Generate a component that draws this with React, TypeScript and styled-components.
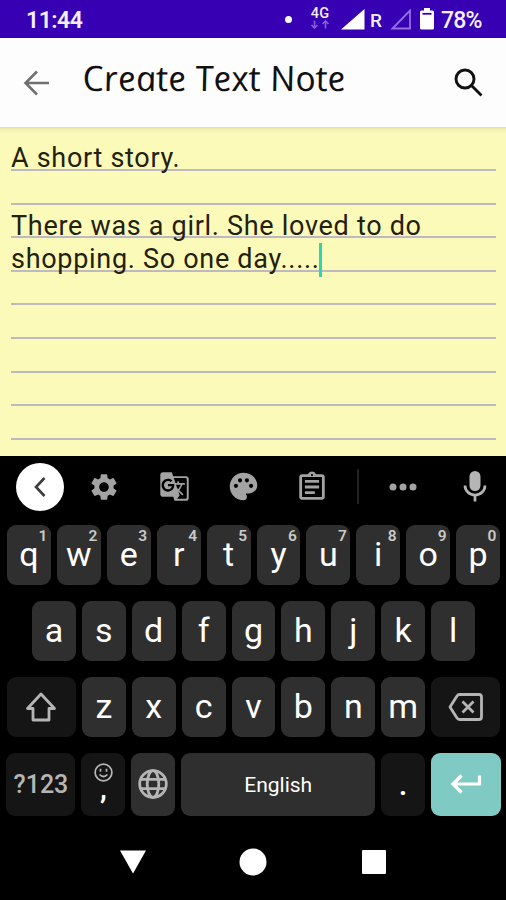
import React from "react";
import styled, { createGlobalStyle, css } from "styled-components";
import {
  MdSettings,
  MdGTranslate,
  MdPalette,
  MdOutlineAssignment,
} from "react-icons/md";

const GlobalStyle = createGlobalStyle`
  * { box-sizing: border-box; }
  body { margin: 0; background: #000; }
  svg { display: block; flex: none; }
`;

const Screen = styled.div`
  width: 506px;
  height: 900px;
  display: flex;
  flex-direction: column;
  overflow: hidden;
  background: #000;
  font-family: Roboto, "Liberation Sans", sans-serif;
`;

const StatusBar = styled.header`
  height: 38px;
  flex: none;
  display: flex;
  align-items: center;
  justify-content: space-between;
  padding: 2px 24px 0 26px;
  background: #3700b3;
  color: #f4f0ff;
  font-size: 23px;
  font-weight: 500;
`;

const Clock = styled.span`
  font-weight: 600;
  letter-spacing: -0.5px;
`;

const StatusIcons = styled.div`
  display: flex;
  align-items: center;
`;

const Dot = styled.i`
  width: 7px;
  height: 7px;
  margin: -2px 18px 0 0;
  border-radius: 50%;
  background: #fff;
`;

const Network = styled.div`
  display: flex;
  flex-direction: column;
  align-items: center;
  width: 20px;
  margin: -2px 11px 0 0;
  font-size: 14.5px;
  line-height: 12px;
  letter-spacing: 0.3px;
`;

const Roaming = styled.span`
  width: 12px;
  margin: 1px 8px 0 5px;
  font-size: 19px;
`;

const Battery = styled.svg`
  margin-left: 7px;
`;

const Percent = styled.span`
  width: 41px;
  margin-left: 6px;
  letter-spacing: -0.8px;
`;

const AppBar = styled.div`
  height: 89px;
  flex: none;
  display: flex;
  align-items: center;
  padding: 0 22px 0 22px;
  background: #fdfdfd;
`;

const Title = styled.h1`
  flex: 1;
  margin: -10px 0 0 34px;
  color: #111;
  font: italic 400 35px "Open Sans", "Noto Sans", sans-serif;
  white-space: nowrap;
  transform: skewX(11deg) scaleX(1.03);
  transform-origin: 0 75%;
`;

const Paper = styled.main`
  height: 329px;
  flex: none;
  padding: 10.4px 10px 0 11px;
  background: linear-gradient(#e2e0a4, #f5f3b2 3px, #fcfab8 7px);
`;

const NoteLine = styled.div`
  height: 33.6px;
  display: flex;
  padding-top: 5px;
  border-bottom: 2px solid #bcb9c2;
  color: #22210f;
  font-size: 27px;
  line-height: 33.6px;
  letter-spacing: 0.7px;
  white-space: pre;
`;

const Caret = styled.i`
  width: 3px;
  height: 34px;
  flex: none;
  margin-left: -1px;
  background: #2bd4b2;
`;

const Tools = styled.div`
  height: 61px;
  flex: none;
  display: grid;
  grid-template-columns: 58px 70px 70px 69px 68px 24px 66px 78px;
  place-items: center;
  padding-left: 11px;
  color: #a3a3a3;
`;

const Collapse = styled.button`
  width: 48px;
  height: 48px;
  display: grid;
  place-items: center;
  padding: 0;
  border: 0;
  border-radius: 50%;
  background: #fff;
`;

const Divider = styled.i`
  width: 1.5px;
  height: 35px;
  background: #222;
`;

const Keyboard = styled.div`
  display: flex;
  flex-direction: column;
  gap: 16px;
  padding: 8px 5.5px 0 6.5px;
`;

const KeyRow = styled.div<{ $h?: number }>`
  height: ${(p) => p.$h ?? 60}px;
  display: flex;
  justify-content: center;
  gap: 6px;
`;

const Key = styled.button<{ $w?: number; $tone?: "dark" | "accent" }>`
  position: relative;
  width: ${(p) => p.$w ?? 43.9}px;
  flex: none;
  display: flex;
  align-items: center;
  justify-content: center;
  padding: 0;
  border: 0;
  border-radius: 9px;
  background: #2f2f2f;
  color: #fff;
  font-family: inherit;
  font-size: 34px;
  line-height: 40px;
  ${(p) => p.$tone === "dark" && css`background: #151515; color: #b5b5b5;`}
  ${(p) => p.$tone === "accent" && css`background: #7fcbc3; color: #fff;`}
`;

const Letter = styled.span`
  margin-top: -3px;
`;

const Hint = styled.sup`
  position: absolute;
  top: 4px;
  right: 3.5px;
  color: #c9c9c9;
  font-size: 15.5px;
  font-weight: 600;
  line-height: 15px;
`;

const Label = styled.span<{ $size: number; $weight?: number }>`
  margin-top: 2px;
  font-size: ${(p) => p.$size}px;
  font-weight: ${(p) => p.$weight ?? 400};
`;

const EmojiComma = styled.div`
  height: 100%;
  display: flex;
  flex-direction: column;
  align-items: center;
  padding-top: 10px;
`;

const Comma = styled.span`
  margin-top: -4px;
  color: #fff;
  font-size: 29px;
  font-weight: 600;
  line-height: 20px;
`;

const Period = styled.span`
  margin-top: 2px;
  color: #fff;
  font-size: 31px;
  font-weight: 500;
`;

const NavBar = styled.nav`
  display: flex;
  align-items: center;
  justify-content: center;
  gap: 92.5px;
  padding-top: 32px;
`;

const lines = [
  "A short story.",
  "",
  "There was a girl. She loved to do",
  "shopping. So one day.....",
  "",
  "",
  "",
  "",
  "",
];

export default function App() {
  return (
    <>
      <GlobalStyle />
      <Screen>
        <StatusBar>
          <Clock>11:44</Clock>
          <StatusIcons>
            <Dot />
            <Network>
              4G
              <svg width="20" height="10" viewBox="0 0 20 10" fill="none" stroke="#8260d5" strokeWidth="1.6">
                <path d="M4.500 0.500v7M1.500 5l3 3 3-3M15.500 8.500v-7M12.500 4l3-3 3 3" />
              </svg>
            </Network>
            <svg width="24" height="22" viewBox="0 0 24 22">
              <path d="M0 20.500 23.500 0v20.500Z" fill="#fff" />
            </svg>
            <Roaming>R</Roaming>
            <svg width="22" height="22" viewBox="0 0 22 22">
              <path d="M2.500 19.500 20 1.500v18Z" fill="none" stroke="#9272dc" strokeWidth="1.800" />
            </svg>
            <Battery width="16" height="24" viewBox="0 0 16 24">
              <path d="M5 0h6v2.500h2.500q1.500 0 1.500 1.500v16q0 1.500-1.500 1.500h-11Q1 21.500 1 20V4q0-1.500 1.500-1.500H5Z" fill="#fff" />
              <path d="M3.500 5.800h9" stroke="#3700b3" strokeWidth="1.800" />
            </Battery>
            <Percent>78%</Percent>
          </StatusIcons>
        </StatusBar>

        <AppBar>
          <svg width="28" height="28" viewBox="0 0 28 28" fill="none" stroke="#707070" strokeWidth="2.600">
            <path d="M27 14H3.500M15 2.500 3.500 14 15 25.500" />
          </svg>
          <Title>Create Text Note</Title>
          <svg width="30" height="30" viewBox="0 0 30 30" fill="none" stroke="#111" strokeWidth="2.900">
            <circle cx="11" cy="11" r="9" />
            <path d="m18 18 9.500 9.500" />
          </svg>
        </AppBar>

        <Paper>
          {lines.map((text, i) => (
            <NoteLine key={i}>
              {text}
              {i === 3 && <Caret />}
            </NoteLine>
          ))}
        </Paper>

        <Tools>
          <Collapse>
            <svg width="14" height="22" viewBox="0 0 14 22" fill="none" stroke="#3b3b3b" strokeWidth="2.600">
              <path d="M11.500 2 3 11l8.500 9" />
            </svg>
          </Collapse>
          <MdSettings size={32} />
          <MdGTranslate size={31} />
          <MdPalette size={33} />
          <MdOutlineAssignment size={34} />
          <Divider />
          <svg width="28" height="8" viewBox="0 0 28 8" fill="currentColor">
            <circle cx="4" cy="4" r="3.500" />
            <circle cx="14" cy="4" r="3.500" />
            <circle cx="24" cy="4" r="3.500" />
          </svg>
          <svg width="24" height="32" viewBox="0 0 24 32">
            <rect x="6.500" y="0" width="11" height="20" rx="5.500" fill="#b5b5b5" />
            <path d="M2 14.500a10 9.500 0 0 0 20 0M12 24v6.500" fill="none" stroke="#b5b5b5" strokeWidth="2.700" />
          </svg>
        </Tools>

        <Keyboard>
          <KeyRow>
            {"qwertyuiop".split("").map((c, i) => (
              <Key key={c}>
                <Letter>{c}</Letter>
                <Hint>{(i + 1) % 10}</Hint>
              </Key>
            ))}
          </KeyRow>
          <KeyRow>
            {"asdfghjkl".split("").map((c) => (
              <Key key={c}><Letter>{c}</Letter></Key>
            ))}
          </KeyRow>
          <KeyRow>
            <Key $w={69} $tone="dark">
              <svg width="32" height="30" viewBox="0 0 32 30" fill="none" stroke="#b5b5b5" strokeWidth="2.800" strokeLinejoin="round">
                <path d="M16 2 2.500 16.500H8V28h16V16.500h5.500Z" />
              </svg>
            </Key>
            {"zxcvbnm".split("").map((c) => (
              <Key key={c}><Letter>{c}</Letter></Key>
            ))}
            <Key $w={69} $tone="dark">
              <svg width="36" height="28" viewBox="0 0 36 28" fill="none" stroke="#b5b5b5" strokeWidth="2.800" strokeLinejoin="round">
                <path d="M11.500 1.500H31q2.500 0 2.500 2.500v20q0 2.500-2.500 2.500H11.500Q10 26.500 9 25L2 14l7-11q1-1.500 2.500-1.500Z" />
                <path d="m14.500 8.500 11 11m0-11-11 11" />
              </svg>
            </Key>
          </KeyRow>
          <KeyRow $h={62.5}>
            <Key $w={69} $tone="dark"><Label $size={25} $weight={500}>?123</Label></Key>
            <Key $tone="dark">
              <EmojiComma>
                <svg width="19" height="19" viewBox="0 0 19 19" fill="none" stroke="#b5b5b5" strokeWidth="1.700">
                  <circle cx="9.500" cy="9.500" r="8.400" />
                  <path d="M5.500 11.500q4 4 8 0M6.500 5.800v3M12.500 5.800v3" />
                </svg>
                <Comma>,</Comma>
              </EmojiComma>
            </Key>
            <Key>
              <svg width="30" height="30" viewBox="0 0 30 30" fill="none" stroke="#b5b5b5" strokeWidth="2.800">
                <circle cx="15" cy="15" r="13.300" />
                <ellipse cx="15" cy="15" rx="5.800" ry="13.300" />
                <path d="M3 10.300h24M3 19.700h24" />
              </svg>
            </Key>
            <Key $w={194}><Label $size={21}>English</Label></Key>
            <Key $tone="dark"><Period>.</Period></Key>
            <Key $w={69.5} $tone="accent">
              <svg width="32" height="20" viewBox="0 0 32 20" fill="none" stroke="#fff" strokeWidth="3.200">
                <path d="M29.500 1.500V10H3.500M11.500 1.500 3 10l8.500 8.500" />
              </svg>
            </Key>
          </KeyRow>
        </Keyboard>

        <NavBar>
          <svg width="28" height="26" viewBox="0 0 28 26">
            <path d="M1 1.500h26L14 24.500Z" fill="#fff" />
          </svg>
          <svg width="28" height="28" viewBox="0 0 28 28">
            <circle cx="14" cy="14" r="13.500" fill="#fff" />
          </svg>
          <svg width="28" height="26" viewBox="0 0 28 26">
            <rect x="2" y="1" width="24" height="24" rx="1" fill="#fff" />
          </svg>
        </NavBar>
      </Screen>
    </>
  );
}
